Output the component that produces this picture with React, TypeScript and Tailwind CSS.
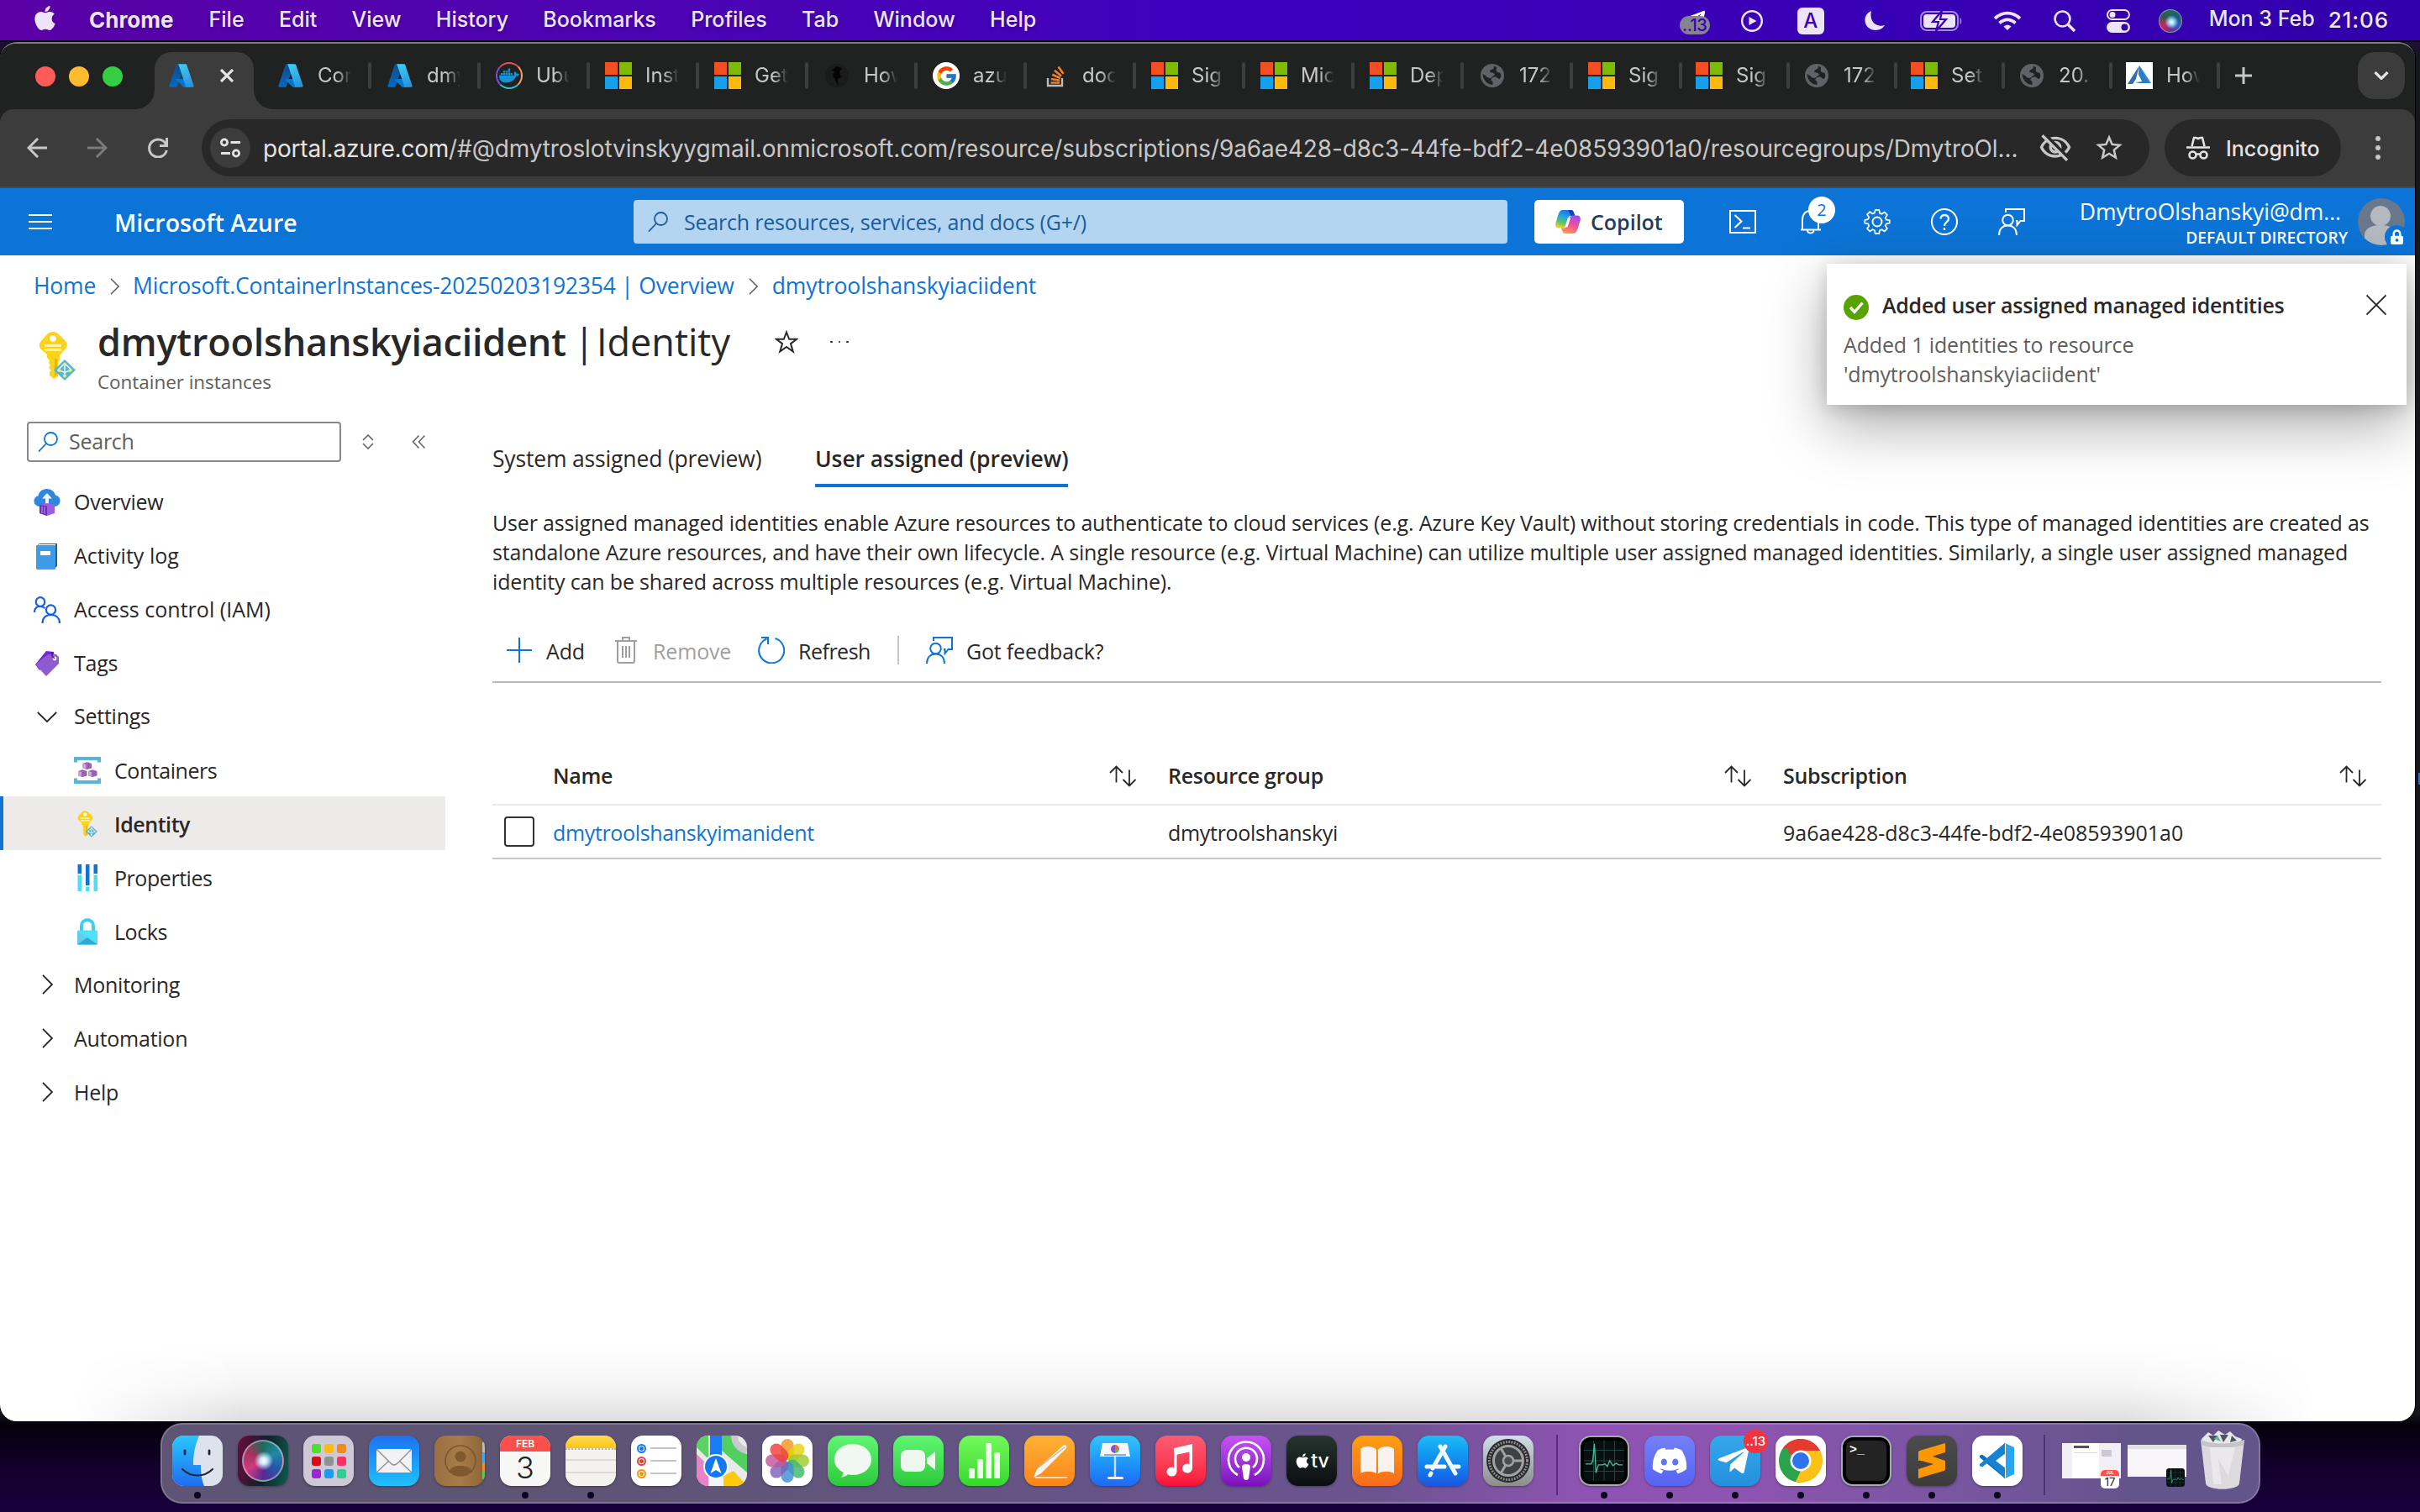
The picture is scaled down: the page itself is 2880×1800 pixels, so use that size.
import React from "react";
import { FaApple, FaDiscord, FaDocker, FaTelegramPlane } from "react-icons/fa";
import { FcGoogle } from "react-icons/fc";
import { MdOutlineVisibilityOff, MdStarBorder } from "react-icons/md";

/* ---------- shared glyphs ---------- */

function AzureLogo({ className }: { className: string }) {
  return (
    <svg viewBox="0 0 96 96" className={className}>
      <defs>
        <linearGradient id="azA" x1="0.6" y1="0" x2="0.3" y2="1">
          <stop offset="0" stopColor="#114a8b" />
          <stop offset="1" stopColor="#0669bc" />
        </linearGradient>
        <linearGradient id="azB" x1="0.3" y1="0" x2="0.7" y2="1">
          <stop offset="0" stopColor="#3ccbf4" />
          <stop offset="1" stopColor="#2892df" />
        </linearGradient>
      </defs>
      <path fill="url(#azA)" d="M33.338 6.544h26.038l-27.03 80.087a4.152 4.152 0 0 1-3.933 2.824H8.149a4.145 4.145 0 0 1-3.928-5.47L29.404 9.368a4.152 4.152 0 0 1 3.934-2.825z" />
      <path fill="#0078d4" d="M71.175 60.261h-41.29a1.911 1.911 0 0 0-1.305 3.309l26.532 24.764a4.171 4.171 0 0 0 2.846 1.121h23.38z" />
      <path fill="url(#azB)" d="M66.595 9.364a4.145 4.145 0 0 0-3.928-2.82H33.648a4.146 4.146 0 0 1 3.928 2.82l25.184 74.62a4.146 4.146 0 0 1-3.928 5.472h29.02a4.146 4.146 0 0 0 3.927-5.472z" />
    </svg>
  );
}

function MicrosoftLogo() {
  return (
    <div className="grid size-8 grid-cols-2 gap-[2px]">
      <div className="bg-[#f25022]" />
      <div className="bg-[#7fba00]" />
      <div className="bg-[#15a0ee]" />
      <div className="bg-[#ffb90a]" />
    </div>
  );
}

function Globe() {
  return (
    <svg viewBox="0 0 32 32" className="size-8">
      <circle cx="16" cy="16" r="14" fill="#5f6368" />
      <path d="M17.500 4.500c1 2 0 4-2.500 4.500-2 .5-2 1.500-1.500 3l4 1c2 1 1.500 3-.5 3.500-1.500.5-1.500 2-3 2.500-2.500.5-4-1-5.500-2.500L4.500 14c.5 7 5 12.500 12 13v-4c-2-.5-2.500-2-1.500-3.500 1-1.800 4-2.500 6-1.500 1.500.7 2 2 3.500 2 1.800-1.500 2.500-4.500 1-7-1.500-1-3.500-.5-4.500-2-1-2 .5-3.500 0-5z" fill="#202221" />
    </svg>
  );
}

function Favicon({ kind }: { kind: string }) {
  if (kind === "azure") return <AzureLogo className="size-8" />;
  if (kind === "ms") return <MicrosoftLogo />;
  if (kind === "globe") return <Globe />;
  if (kind === "docker")
    return (
      <div className="flex size-8 items-center justify-center rounded-full border-2 border-t-[#e8505b] border-r-[#f2a65a] border-b-[#27c4d9] border-l-[#7a4fd0]">
        <FaDocker className="size-6 text-[#1492d6]" />
      </div>
    );
  if (kind === "google")
    return (
      <div className="flex size-8 items-center justify-center rounded-full bg-white">
        <FcGoogle className="size-[27px]" />
      </div>
    );
  if (kind === "stack")
    return (
      <svg viewBox="0 0 32 32" className="size-8" fill="none">
        <path d="M7 19v9h17v-9" stroke="#bcbbbb" strokeWidth="2.4" />
        <path d="M10.500 24.500h10.500M10.800 20l10.300 1.800M12.300 14.800l9.500 4.200M15 9.800l8 6.600M19.500 5.500l6 8.300" stroke="#f48024" strokeWidth="2.600" />
      </svg>
    );
  if (kind === "dark")
    return (
      <svg viewBox="0 0 32 32" className="size-8">
        <circle cx="16" cy="16" r="14" fill="#1a1b1b" />
        <path d="M9 10l7-5 6 2-3 5 2 6-4 2 1 9-4-8-3-5 2-5z" fill="#050505" />
      </svg>
    );
  return (
    <svg viewBox="0 0 32 32" className="size-8">
      <rect width="32" height="32" fill="#fff" />
      <path d="M16 4l5 7 9 14H18l-7-1 8-1-4-9z" fill="#3b8fd0" />
      <path d="M16 4L2 26h6l4-6z" fill="#2f6fb2" />
      <path d="M16 4l4 8 8 13H12l8-2-5-8z" fill="#2d7cc1" />
    </svg>
  );
}

function Magnifier({ className }: { className: string }) {
  return (
    <svg viewBox="0 0 24 24" fill="none" stroke="currentColor" strokeWidth="1.800" className={className}>
      <circle cx="15.500" cy="8.500" r="7.500" />
      <path d="M10 14L1 23.500" />
    </svg>
  );
}

function Feedback({ className }: { className: string }) {
  return (
    <svg viewBox="0 0 32 32" fill="none" stroke="currentColor" strokeWidth="2" className={className}>
      <path d="M9 5V1h22v14h-4.500v0L22.500 20v-5H21" />
      <circle cx="11.500" cy="14" r="6.300" />
      <path d="M1 32c0-7 4-11.500 10.500-11.500S22 25 22 32" />
    </svg>
  );
}

function ChevronRight({ className }: { className: string }) {
  return (
    <svg viewBox="0 0 13 24" fill="none" stroke="currentColor" strokeWidth="1.800" className={className}>
      <path d="M1 .8L12 12 1 23.200" />
    </svg>
  );
}

function KeyIcon({ className }: { className: string }) {
  return (
    <svg viewBox="0 0 44 58" className={className}>
      <path d="M17 0c3 0 5 1 7 3l8 8c2.500 2.500 2.500 6 0 9l-7 8v5l-2 3v17l-5 3-5-4 0-4 2-2-3-3 2-3-2-3 1-3-3-3v-4L3 21c-3-4-3-7 0-10l7-8c2-2 4-3 7-3z" fill="#fdd31a" />
      <path d="M19 32h3v18l-3 4z" fill="#e8b50e" />
      <circle cx="17" cy="8" r="3.800" fill="#fff" />
      <rect x="7" y="15" width="20" height="2.800" fill="#fff3a8" />
      <rect x="7" y="20" width="20" height="2.800" fill="#fff3a8" />
      <path d="M31 33l13 12.500L31 58 18 45.500z" fill="#59b4d9" />
      <path d="M31 37v17M23 45.500l8-8 8 8-8 3z" stroke="#e6f6fb" strokeWidth="1.600" fill="none" />
      <circle cx="31" cy="39" r="2" fill="#d7f08a" />
      <circle cx="24.500" cy="46" r="2" fill="#d7f08a" />
      <circle cx="37.500" cy="46" r="2" fill="#d7f08a" />
      <circle cx="31" cy="52.500" r="2" fill="#d7f08a" />
    </svg>
  );
}

/* ---------- macOS menu bar ---------- */

function MenuBar() {
  return (
    <div className="flex h-12 items-center bg-linear-to-r from-[#5a00a6] via-[#3f00be] to-[#3300ad] font-['Inter','Liberation_Sans',sans-serif] text-[25px] font-medium whitespace-nowrap text-[#ece4f8] text-shadow-[0_2px_4px_rgb(0_0_0/0.25)]">
      <FaApple className="mb-[5px] ml-[37px] size-[33px]" />
      <div className="mb-px ml-[36px] text-[26px] font-bold">Chrome</div>
      <div className="mb-px ml-[42px] flex gap-[41.300px]">
        <span>File</span>
        <span>Edit</span>
        <span>View</span>
        <span>History</span>
        <span>Bookmarks</span>
        <span>Profiles</span>
        <span>Tab</span>
        <span>Window</span>
        <span>Help</span>
      </div>
      <div className="ml-auto flex items-center pt-[2px]">
        <div className="relative h-8 w-9">
          <FaTelegramPlane className="ml-[2px] size-[30px] text-white" />
          <div className="absolute top-[10px] left-0 flex h-[22px] w-9 items-center justify-center rounded-full bg-[#85848c] text-[20px] tracking-[-0.500px] text-[#3c00b8] text-shadow-none">..13</div>
        </div>
        <svg viewBox="0 0 26 26" className="ml-[37px] size-[26px]">
          <circle cx="13" cy="13" r="11.800" fill="none" stroke="currentColor" strokeWidth="2.400" />
          <path d="M9.500 8v10l9-5z" fill="currentColor" />
        </svg>
        <div className="ml-[41px] flex size-8 items-center justify-center rounded-md bg-[#ece4f8] text-[24px] text-[#3a00b4] text-shadow-none">A</div>
        <svg viewBox="0 0 26 26" className="ml-[47px] h-[26px] w-[26px]">
          <path d="M9 1C2 4 0 11 2.500 17c3.500 8 17 10 22.500 1C16 21 6 15 9 1z" fill="currentColor" />
        </svg>
        <svg viewBox="0 0 50 26" className="ml-[41px] h-[26px] w-[50px]">
          <rect x="1" y="2" width="44" height="22" rx="7" fill="none" stroke="currentColor" strokeWidth="2" opacity=".6" />
          <rect x="4" y="5" width="38" height="16" rx="4" fill="currentColor" />
          <path d="M47.500 9c2.500 1 2.500 7 0 8z" fill="currentColor" opacity=".6" />
          <path d="M26 1L15 14h7l-3 11 12-14h-7z" fill="currentColor" stroke="#3800b4" strokeWidth="2.200" />
        </svg>
        <svg viewBox="0 0 34 24" className="ml-[37px] h-[24px] w-[34px]" fill="none" stroke="currentColor" strokeWidth="3.800">
          <path d="M2 9c9-8.500 21-8.500 30 0M7.500 14.500c6-5.500 13-5.500 19 0" />
          <path d="M17 23l-4.500-4.500c3-2.500 6-2.500 9 0z" fill="currentColor" stroke="none" />
        </svg>
        <svg viewBox="0 0 26 26" className="ml-[38px] size-[26px]" fill="none" stroke="currentColor" strokeWidth="2.600">
          <circle cx="10.500" cy="10.500" r="9" />
          <path d="M17 17l8 8" strokeWidth="3.400" />
        </svg>
        <svg viewBox="0 0 28 28" className="ml-[37px] size-[28px]">
          <rect x="1" y="1" width="26" height="11" rx="5.500" fill="none" stroke="currentColor" strokeWidth="2" />
          <circle cx="7" cy="6.500" r="3.500" fill="currentColor" />
          <rect x="0" y="15" width="28" height="13" rx="6.500" fill="currentColor" />
          <circle cx="21.500" cy="21.500" r="4" fill="#3600b1" />
        </svg>
        <div className="ml-[34px] size-7 rounded-full border border-white/40 bg-[radial-gradient(circle_at_55%_55%,#fff_0%,#9fd8ff_15%,transparent_40%),conic-gradient(#1b6b58,#1c5c7a,#2b5cc4,#7a2a8a,#c42a58,#34564e,#1b6b58)]" />
        <div className="mr-[37px] ml-[32px] -mt-1 flex gap-[16px]">
          <span>Mon 3 Feb</span>
          <span className="text-[26px] tracking-[0.900px]">21:06</span>
        </div>
      </div>
    </div>
  );
}

/* ---------- Chrome ---------- */

const TABS: [string, string][] = [
  ["azure", "Cor"],
  ["azure", "dmy"],
  ["docker", "Ubu"],
  ["ms", "Inst"],
  ["ms", "Get"],
  ["dark", "How"],
  ["google", "azu"],
  ["stack", "doc"],
  ["ms", "Sig"],
  ["ms", "Mic"],
  ["ms", "Dep"],
  ["globe", "172"],
  ["ms", "Sig"],
  ["ms", "Sig"],
  ["globe", "172"],
  ["ms", "Set"],
  ["globe", "20."],
  ["white", "How"],
];

function TabStrip() {
  return (
    <div className="flex h-[78px] bg-[#202221] font-['Inter','Liberation_Sans',sans-serif]">
      <div className="mt-[27px] ml-[42px] flex gap-4">
        <div className="size-6 rounded-full bg-[#ff5b57]" />
        <div className="size-6 rounded-full bg-[#fdbc30]" />
        <div className="size-6 rounded-full bg-[#35cd42]" />
      </div>
      <svg viewBox="0 0 24 24" className="mt-[54px] ml-[14px] size-6 fill-[#3c3c3c]">
        <path d="M24 0v24H0C14 24 24 14 24 0z" />
      </svg>
      <div className="mt-[10px] flex h-[68px] w-[118px] items-center rounded-t-[20px] bg-[#3c3c3c] pb-3 pl-4">
        <AzureLogo className="size-8" />
        <svg viewBox="0 0 16 16" className="ml-[30px] size-4" stroke="#e3e3e3" strokeWidth="3.200">
          <path d="M1 1l14 14M15 1L1 15" />
        </svg>
      </div>
      <svg viewBox="0 0 24 24" className="mt-[54px] size-6 fill-[#3c3c3c]">
        <path d="M0 0v24h24C10 24 0 14 0 0z" />
      </svg>
      <div className="mt-[22px] ml-1 flex h-8">
        {TABS.map(([kind, label], i) => (
          <div key={i} className={i < 12 ? "flex w-[130px] items-center" : "flex w-[128px] items-center"}>
            <Favicon kind={kind} />
            <div className="ml-4 w-[56px] text-[24px] whitespace-nowrap text-[#c7c7c7] [mask-image:linear-gradient(to_right,#000_22px,transparent_40px)]">{label}</div>
            <div className="ml-1 h-8 w-1 rounded-full bg-[#3d3f3e]" />
          </div>
        ))}
      </div>
      <svg viewBox="0 0 20 20" className="mt-[28px] ml-[2px] size-5" stroke="#c7c7c7" strokeWidth="3">
        <path d="M10 0v20M0 10h20" />
      </svg>
      <div className="mt-[10px] mr-3 ml-auto flex size-14 items-center justify-center rounded-[20px] bg-[#3c3c3c]">
        <svg viewBox="0 0 18 10" className="h-[10px] w-[18px]" fill="none" stroke="#e3e3e3" strokeWidth="3.200">
          <path d="M1.500 1L9 8.500 16.500 1" />
        </svg>
      </div>
    </div>
  );
}

function AddressBar() {
  return (
    <div className="bg-[#202221]">
      <div className="flex h-[94px] items-center rounded-t-[16px] border-b-2 border-[#474747] bg-[#3c3c3c] font-['Inter','Liberation_Sans',sans-serif] text-[#c7c7c7]">
        <svg viewBox="0 0 24 24" className="ml-8 size-6" fill="none" stroke="currentColor" strokeWidth="3">
          <path d="M13 1L2 12l11 11M2 12h22" />
        </svg>
        <svg viewBox="0 0 24 24" className="ml-12 size-6" fill="none" stroke="#7b7b7b" strokeWidth="3">
          <path d="M11 1l11 11-11 11M22 12H0" />
        </svg>
        <svg viewBox="0 0 24 24" className="ml-12 size-6" fill="none" stroke="currentColor" strokeWidth="3">
          <path d="M22.500 0v9.500H14M22 9A10.500 10.500 0 1 0 22.300 15" />
        </svg>
        <div className="ml-10 flex h-[68px] w-[2318px] items-center rounded-full bg-[#282828] pl-[10px]">
          <div className="flex size-12 items-center justify-center rounded-full bg-[#3c3c3c]">
            <svg viewBox="0 0 24 24" className="size-6" fill="none" stroke="#e3e3e3" strokeWidth="2.800">
              <circle cx="5" cy="5.500" r="3.600" />
              <circle cx="19" cy="18.500" r="3.600" />
              <path d="M12.500 5.500H24M1 18.500h11" />
            </svg>
          </div>
          <div className="ml-[15px] w-[2102px] pt-px text-[28px] tracking-[-0.110px] whitespace-nowrap">
            <span className="tracking-[-0.200px] text-[#e3e3e3]">portal.azure.com</span>
            <span>/#@dmytroslotvinskyygmail.onmicrosoft.com/resource/subscriptions/9a6ae428-d8c3-44fe-bdf2-4e08593901a0/resourcegroups/DmytroOl...</span>
          </div>
          <MdOutlineVisibilityOff className="ml-[11px] size-[40px]" />
          <MdStarBorder className="ml-[25px] size-[38px]" />
        </div>
        <div className="ml-[18px] flex h-[68px] w-[210px] items-center rounded-full bg-[#282828] pl-[26px] text-[#e3e3e3]">
          <svg viewBox="0 0 28 28" className="size-7" fill="none" stroke="currentColor" strokeWidth="2.600">
            <path d="M0 13.500h28M6.500 12L9 2h2.500l2.500 1 2.500-1H19l2.500 10" />
            <circle cx="7.500" cy="22.500" r="4" />
            <circle cx="20.500" cy="22.500" r="4" />
            <path d="M11 21.500h6" />
          </svg>
          <span className="ml-[19px] pt-[3px] text-[25px] font-medium">Incognito</span>
        </div>
        <div className="ml-[41px] flex flex-col gap-[5px]">
          <div className="size-[6px] rounded-full bg-[#c7c7c7]" />
          <div className="size-[6px] rounded-full bg-[#c7c7c7]" />
          <div className="size-[6px] rounded-full bg-[#c7c7c7]" />
        </div>
      </div>
    </div>
  );
}

/* ---------- Azure portal ---------- */

function CopilotIcon() {
  return (
    <svg viewBox="0 0 30 28" className="h-7 w-[30px]">
      <defs>
        <linearGradient id="cpA" x1="0.6" y1="0" x2="0.3" y2="1">
          <stop offset="0" stopColor="#1c6fe0" />
          <stop offset=".4" stopColor="#26a8e0" />
          <stop offset=".7" stopColor="#5cc36a" />
          <stop offset="1" stopColor="#f2cf2a" />
        </linearGradient>
        <linearGradient id="cpB" x1="0.7" y1="0" x2="0.3" y2="1">
          <stop offset="0" stopColor="#a24be8" />
          <stop offset=".5" stopColor="#ee4f9a" />
          <stop offset="1" stopColor="#fb9a52" />
        </linearGradient>
      </defs>
      <path d="M9 0h9c2.500 0 3.500 2 4.500 5l.5 2h-4c-3 0-3.500 2-4.500 5l-2 6c-1 2.500-2 3.500-4 3.500H4c-3 0-4.500-2-3.600-6l3-10C4.500 2 6 0 9 0z" fill="url(#cpA)" />
      <path d="M15 0h4c2 0 3 2 3.700 5l.5 2h-4.500z" fill="#1b3fc4" />
      <path d="M21 28h-9c-2.500 0-3.500-2-4.500-5L7 21.500h2.500c3 0 4-2 5-5l2-6c1-2.500 2-4 4-4H26c3 0 4.500 2 3.600 6l-3 10C25.500 26 24 28 21 28z" fill="url(#cpB)" />
      <path d="M16.500 9.500L13 20" stroke="#fff" strokeWidth="3" />
    </svg>
  );
}

function PortalHeader() {
  return (
    <div className="flex h-20 items-center bg-[#0c74d6] text-white">
      <div className="ml-[34px] flex flex-col gap-[6px]">
        <div className="h-[2px] w-7 bg-white" />
        <div className="h-[2px] w-7 bg-white" />
        <div className="h-[2px] w-7 bg-white" />
      </div>
      <div className="ml-[74px] w-[618px] pt-[2px] text-[28.500px] font-semibold">Microsoft Azure</div>
      <div className="flex h-[52px] w-[1040px] items-center rounded-[4px] bg-[#b3d5f2] pl-[17px] text-[#1a5c9c]">
        <Magnifier className="size-6" />
        <span className="ml-[19px] pt-px text-[25px] tracking-[-0.200px]">Search resources, services, and docs (G+/)</span>
      </div>
      <div className="ml-8 flex h-[52px] w-[178px] items-center rounded-[5px] bg-white pl-[25px] text-[#243a5e]">
        <CopilotIcon />
        <span className="ml-[12px] pt-px text-[25px] font-semibold">Copilot</span>
      </div>
      <svg viewBox="0 0 32 28" className="ml-[54px] h-7 w-8" fill="none" stroke="currentColor" strokeWidth="2">
        <rect x="1" y="1" width="30" height="26" />
        <path d="M6.500 6l8 7.500-8 7.500M16 21.500h9" />
      </svg>
      <div className="relative ml-[52px] h-8 w-7">
        <svg viewBox="0 0 26 32" className="h-8 w-[26px]" fill="none" stroke="currentColor" strokeWidth="2">
          <path d="M1 25.500h24M3 25V13C3 7 7 3 12.500 3S22 7 22 13v12M9 26c0 4.500 7.500 4.500 7.500 0" />
        </svg>
        <div className="absolute -top-[14px] left-[10px] flex size-8 items-center justify-center rounded-full bg-white text-[20px] text-[#0c74d6]">2</div>
      </div>
      <svg viewBox="0 0 32 32" className="ml-[48px] size-8" fill="none" stroke="currentColor" strokeWidth="1.900" strokeLinejoin="round">
        <path d="M13.500 1h5l.8 4.200 2.600 1.100 3.600-2.400 3.500 3.500-2.400 3.600 1.100 2.600L32 14.200v4l-4.300.8-1.100 2.600 2.400 3.600-3.500 3.500-3.600-2.400-2.600 1.100-.8 4.200h-5l-.8-4.200-2.600-1.100-3.600 2.400L3 25.200l2.400-3.600L4.300 19 0 18.200v-4l4.300-1.200 1.100-2.600L3 7l3.500-3.500 3.600 2.400 2.600-1.100z" transform="translate(1.300 1) scale(.92)" />
        <circle cx="16" cy="16" r="5.500" />
      </svg>
      <svg viewBox="0 0 32 32" className="ml-12 size-8" fill="none" stroke="currentColor" strokeWidth="2">
        <circle cx="16" cy="16" r="15" />
        <path d="M11.500 12.500c0-6 9.500-6 9.500 0 0 4-5 4-5 8.500M16 23v3" strokeWidth="2.300" />
      </svg>
      <Feedback className="ml-12 size-8" />
      <div className="mt-1 mr-3 ml-auto flex flex-col items-end">
        <div className="mr-2 h-[34px] text-[26.500px] leading-[34px] tracking-[-0.050px]">DmytroOlshanskyi@dm...</div>
        <div className="h-7 text-[19.200px] leading-7 font-semibold">DEFAULT DIRECTORY</div>
      </div>
      <div className="relative mr-3">
        <svg viewBox="0 0 56 56" className="size-14">
          <defs>
            <clipPath id="avatar">
              <circle cx="28" cy="28" r="28" />
            </clipPath>
          </defs>
          <g clipPath="url(#avatar)">
            <rect width="56" height="56" fill="#69798b" />
            <circle cx="27" cy="21" r="12" fill="#b4bac0" />
            <path d="M8 56V44c0-8 8-12 19-12s19 4 19 12v12z" fill="#b4bac0" />
          </g>
        </svg>
        <div className="absolute right-[-4px] bottom-[-4px] flex size-7 items-center justify-center rounded-full bg-[#0c74d6]">
          <svg viewBox="0 0 16 20" className="h-[19px] w-[15px]">
            <path d="M4 9V5.500C4 0 12 0 12 5.500V9" fill="none" stroke="#fff" strokeWidth="2.600" />
            <rect x="0" y="8" width="16" height="11" rx="2" fill="#fff" />
            <circle cx="8" cy="13.500" r="2" fill="#0c74d6" />
          </svg>
        </div>
      </div>
    </div>
  );
}

function Toast() {
  return (
    <div className="absolute top-[90px] right-[10px] h-[168px] w-[690px] bg-white pt-[30px] pl-5 shadow-[0_24px_70px_rgb(0_0_0/0.34),0_4px_20px_rgb(0_0_0/0.16)]">
      <div className="flex h-10 items-center">
        <svg viewBox="0 0 30 30" className="mt-[3px] size-[30px]">
          <circle cx="15" cy="15" r="15" fill="#57a300" />
          <path d="M8 15l5 5.500L22.500 9.500" fill="none" stroke="#fff" strokeWidth="3.400" />
        </svg>
        <span className="ml-4 text-[25px] font-semibold tracking-[-0.250px] text-[#292827]">Added user assigned managed identities</span>
        <svg viewBox="0 0 24 24" className="mr-6 mb-[3px] ml-auto size-6" stroke="#292827" strokeWidth="1.900">
          <path d="M.5.5l23 23M23.500.5l-23 23" />
        </svg>
      </div>
      <div className="mt-[9px] text-[25px] leading-[35px] tracking-[-0.160px] text-[#605e5c]">
        Added 1 identities to resource
        <br />
        'dmytroolshanskyiaciident'
      </div>
    </div>
  );
}

function NavIcon({ kind }: { kind: string }) {
  if (kind === "overview")
    return (
      <svg viewBox="0 0 32 32" className="size-8">
        <path d="M8 21c-5 0-7.500-3-7.500-6.500S3 8.500 5.500 8.500C6 4 10 0 15.500 0S25 3.500 26 7.500c3 .5 5.500 3 5.500 6.500 0 4-3 7-6.500 7z" fill="#2f86e0" />
        <path d="M16 5l6 6.500h-4V18h-4v-6.500h-4z" fill="#f2f6fc" />
        <path d="M7 19l9-2 9 2v10l-9 3-9-3z" fill="#9a5fe0" />
        <path d="M7 19l9 1.500V32l-9-3z" fill="#6b2fb8" />
        <path d="M10 21v8M13 21.500v8" stroke="#b78bea" strokeWidth="1.200" />
      </svg>
    );
  if (kind === "log")
    return (
      <svg viewBox="0 0 32 32" className="size-8">
        <path d="M8 1h20v27l-3 3V4H5c0-2 1-3 3-3z" fill="#1463ab" />
        <path d="M6 2h20v26H8z" fill="#fff" />
        <rect x="3" y="3" width="23" height="29" rx="1" fill="#3d9be8" />
        <rect x="8" y="10" width="12" height="5" fill="#fff" />
      </svg>
    );
  if (kind === "iam")
    return (
      <svg viewBox="0 0 32 32" className="size-8" fill="none" stroke="#1660d8" strokeWidth="2.200">
        <circle cx="8" cy="6.500" r="5.300" />
        <path d="M1 19c0-4.500 2.500-7 7-7 2 0 4 .6 5.500 2" />
        <circle cx="20.500" cy="16" r="5.600" />
        <path d="M10.500 32c0-6.500 4-10 10-10s10.500 3.500 10.500 10" />
      </svg>
    );
  if (kind === "tags")
    return (
      <svg viewBox="0 0 32 32" className="size-8">
        <path d="M15 1l9 1 1 6-18 16-5-7z" fill="#7a22d6" />
        <path d="M17 5h10l3 3v8L15 31 2 17z" fill="#8f5bd0" />
        <circle cx="25" cy="10" r="2.400" fill="#fff" />
        <path d="M22 2v5l3 3" stroke="#4b1a8c" strokeWidth="1.500" fill="none" />
      </svg>
    );
  if (kind === "containers")
    return (
      <svg viewBox="0 0 32 32" className="size-8">
        <path d="M0 0h32v6.500h-4V4H4v2.500H0zM0 32h32v-6.500h-4V28H4v-2.500H0z" fill="#59b4d9" />
        <path d="M10.500 8l5-1.800L21 8v5.500l-5.500 1.500-5-1.500z M5 17l5-1.800L15.500 17v5.500L10 24l-5-1.500z M17 17l5-1.800L27.500 17v5.500L22 24l-5-1.500z" fill="#9b5fb3" />
        <path d="M10.500 8l4 1v5.500l-4-1zM5 17l4 1v5.500l-4-1zM17 17l4 1v5.500l-4-1z" fill="#c9a3d8" />
      </svg>
    );
  if (kind === "identity")
    return (
      <div className="flex size-8 justify-center">
        <KeyIcon className="h-8 w-6" />
      </div>
    );
  if (kind === "properties")
    return (
      <svg viewBox="0 0 32 32" className="size-8">
        <path d="M4.500 0h4.500v11H4.500zM14 0h4.500v25H14zM23.500 0H28v11h-4.500z" fill="#0f74d4" />
        <path d="M4.500 13H9v19H4.500zM14 27h4.500v5H14zM23.500 13H28v19h-4.500z" fill="#50dcf8" />
        <path d="M4 11h5.500v2H4zM13.500 25H19v2h-5.500zM23 11h5.500v2H23z" fill="#e3e3e3" />
      </svg>
    );
  return (
    <svg viewBox="0 0 32 32" className="size-8">
      <path d="M9 16V9c0-9 14-9 14 0v7" fill="none" stroke="#3fcdf0" strokeWidth="4" />
      <rect x="4" y="14.500" width="24" height="17" rx="1" fill="#50e0fa" />
      <path d="M4 15l12 9-12 7z" fill="#62cdea" />
      <path d="M4 31.500L16 23l12 8.500z" fill="#2fa9cf" />
    </svg>
  );
}

function NavItem({ kind, label, wide }: { kind: string; label: string; wide?: boolean }) {
  return (
    <div className="flex h-16 items-center pl-10">
      <NavIcon kind={kind} />
      <span className={wide ? "ml-4 tracking-[0.020px]" : "ml-4"}>{label}</span>
    </div>
  );
}

function SubNavItem({ kind, label, selected }: { kind: string; label: string; selected?: boolean }) {
  return (
    <div className={selected ? "flex h-16 items-center border-l-4 border-[#0f74d6] bg-[#edebe9] pl-[84px] font-semibold tracking-[-0.450px]" : "flex h-16 items-center pl-[88px] tracking-[-0.450px]"}>
      <div className="pt-[2px]">
        <NavIcon kind={kind} />
      </div>
      <span className="ml-4 pt-[3px]">{label}</span>
    </div>
  );
}

function NavGroup({ label }: { label: string }) {
  return (
    <div className="flex h-16 items-center pl-[50px]">
      <ChevronRight className="h-6 w-[13px]" />
      <span className="ml-[25px] pt-px">{label}</span>
    </div>
  );
}

function Sidebar() {
  return (
    <div className="w-[530px] text-[25px] tracking-[-0.250px] text-[#292827]">
      <div className="flex h-12 items-center pl-8">
        <div className="flex h-12 w-[374px] items-center rounded-[4px] border-2 border-[#8a8886] pl-[11px]">
          <Magnifier className="size-6 text-[#0f74d6]" />
          <span className="ml-[13px] text-[#605e5c]">Search</span>
        </div>
        <svg viewBox="0 0 14 18" className="ml-[25px] h-[18px] w-[14px]" fill="none" stroke="#605e5c" strokeWidth="1.500">
          <path d="M1 7l6-6 6 6M1 11l6 6 6-6" />
        </svg>
        <svg viewBox="0 0 16 16" className="ml-[45px] size-4" fill="none" stroke="#605e5c" strokeWidth="1.500">
          <path d="M8.500.5L1.500 8l7 7.500M15.500.5L8.500 8l7 7.500" />
        </svg>
      </div>
      <div className="pt-4">
        <NavItem kind="overview" label="Overview" />
        <NavItem kind="log" label="Activity log" wide />
        <NavItem kind="iam" label="Access control (IAM)" wide />
        <NavItem kind="tags" label="Tags" />
        <div className="flex h-[62px] items-center pl-11">
          <svg viewBox="0 0 24 13" className="h-[13px] w-6" fill="none" stroke="currentColor" strokeWidth="1.800">
            <path d="M.8 1L12 12 23.200 1" />
          </svg>
          <span className="ml-5">Settings</span>
        </div>
        <SubNavItem kind="containers" label="Containers" />
        <SubNavItem kind="identity" label="Identity" selected />
        <SubNavItem kind="properties" label="Properties" />
        <SubNavItem kind="locks" label="Locks" />
        <NavGroup label="Monitoring" />
        <NavGroup label="Automation" />
        <NavGroup label="Help" />
      </div>
    </div>
  );
}

function HeaderCell({ label, className }: { label: string; className: string }) {
  return (
    <div className={className}>
      <span className="-mt-px">{label}</span>
      <svg viewBox="0 0 32 26" className="h-[26px] w-8" fill="none" stroke="currentColor" strokeWidth="1.800">
        <path d="M8.500 20.500V1.500M1 9l7.500-7.500L16 9M24 5.500V24.500M16.500 17l7.500 7.500 7.500-7.500" />
      </svg>
    </div>
  );
}

function IdentityPanel() {
  return (
    <div className="ml-14 w-[2248px] text-[25px] tracking-[-0.160px] text-[#292827]">
      <div className="flex gap-[60px] pt-[22px] text-[26.500px]">
        <div className="h-14 w-[324px] leading-[44px] whitespace-nowrap">System assigned (preview)</div>
        <div className="h-14 w-[301px] border-b-4 border-[#0f74d6] leading-[44px] font-semibold tracking-[-0.080px] whitespace-nowrap">User assigned (preview)</div>
      </div>
      <div className="pt-[25px] leading-[35px] whitespace-nowrap">
        User assigned managed identities enable Azure resources to authenticate to cloud services (e.g. Azure Key Vault) without storing credentials in code. This type of managed identities are created as
        <br />
        standalone Azure resources, and have their own lifecycle. A single resource (e.g. Virtual Machine) can utilize multiple user assigned managed identities. Similarly, a single user assigned managed
        <br />
        identity can be shared across multiple resources (e.g. Virtual Machine).
      </div>
      <div className="mt-[28px] flex h-[75px] items-center border-b-2 border-[#bbb9b8] pb-[2px] pl-[17px]">
        <svg viewBox="0 0 30 30" className="size-[30px]" stroke="#0f74d6" strokeWidth="2">
          <path d="M15 0v30M0 15h30" />
        </svg>
        <span className="mt-[5px] ml-[17px] w-[82px]">Add</span>
        <svg viewBox="0 0 26 32" className="h-8 w-[26px]" fill="none" stroke="#a19f9d" strokeWidth="2">
          <path d="M0 5h26M9 5V1h8v4M3 5v24c0 1.500.5 2 2 2h16c1.500 0 2-.5 2-2V5M9 11v14M13 11v14M17 11v14" />
        </svg>
        <span className="mt-[5px] ml-[19px] w-[125px] text-[#a19f9d]">Remove</span>
        <svg viewBox="0 0 32 32" className="size-8" fill="none" stroke="#0f74d6" strokeWidth="2">
          <path d="M20.500 2A15 15 0 1 1 10.500 2.500M4 1h8v8" />
        </svg>
        <span className="mt-[5px] ml-4 tracking-[-0.500px]">Refresh</span>
        <div className="ml-[32px] h-[34px] w-[2px] bg-[#c8c6c4]" />
        <Feedback className="ml-[32px] size-8 text-[#0f74d6]" />
        <span className="mt-[5px] ml-4">Got feedback?</span>
      </div>
      <div className="mt-[78px] flex h-[68px] items-center border-b-2 border-[#eaeaea] pl-[72px] font-semibold tracking-[-0.300px]">
        <HeaderCell label="Name" className="flex w-[694px] items-center justify-between" />
        <HeaderCell label="Resource group" className="ml-[38px] flex w-[694px] items-center justify-between" />
        <HeaderCell label="Subscription" className="ml-[38px] flex w-[694px] items-center justify-between" />
      </div>
      <div className="flex h-16 items-center border-b-2 border-[#c8c8c8] pl-[14px]">
        <div className="size-9 rounded-[4px] border-2 border-[#323130]" />
        <span className="ml-[22px] w-[732px] pt-1 tracking-[-0.350px] text-[#0f74d6]">dmytroolshanskyimanident</span>
        <span className="w-[732px] pt-1 tracking-[-0.300px]">dmytroolshanskyi</span>
        <span className="pt-1 tracking-[-0.010px]">9a6ae428-d8c3-44fe-bdf2-4e08593901a0</span>
      </div>
    </div>
  );
}

function Portal() {
  return (
    <div className="relative flex flex-1 flex-col overflow-hidden bg-white font-['Open_Sans','Noto_Sans',sans-serif]">
      <div className="pointer-events-none absolute bottom-0 left-0 h-[90px] w-full bg-[linear-gradient(to_top,rgb(0_0_0/0.13),rgb(0_0_0/0.04)_45%,transparent)] [mask-image:linear-gradient(to_right,transparent_3%,#000_10%,#000_88%,transparent_96%)]" />
      <PortalHeader />
      <div className="flex h-[72px] items-center pt-[2px] pl-10 text-[26.500px] tracking-[-0.200px] text-[#0f74d6]">
        <span>Home</span>
        <ChevronRight className="ml-[17px] h-5 w-[11px] text-[#605e5c]" />
        <span className="ml-[16px]">Microsoft.ContainerInstances-20250203192354 | Overview</span>
        <ChevronRight className="ml-[17px] h-5 w-[11px] text-[#605e5c]" />
        <span className="ml-[17px] tracking-[-0.100px]">dmytroolshanskyiaciident</span>
      </div>
      <div className="flex h-[126px] pl-[46px] text-[#292827]">
        <KeyIcon className="mt-[19px] h-[58px] w-[44px]" />
        <div className="ml-[26px]">
          <div className="flex h-[62px] items-center text-[45px]">
            <span className="w-[567px] font-semibold tracking-[-0.220px]">dmytroolshanskyiaciident</span>
            <span className="w-[27px]">|</span>
            <span className="w-[162px]">Identity</span>
            <svg viewBox="0 0 28 28" className="ml-[50px] size-7" fill="none" stroke="currentColor" strokeWidth="2">
              <path d="M14 2.500l3.200 8.300H26l-7 5.400 2.800 9.300L14 20l-7.800 5.500L9 16.200l-7-5.400h8.800z" />
            </svg>
            <div className="ml-[38px] flex gap-[7px]">
              <div className="size-[2.500px] rounded-full bg-[#292827]" />
              <div className="size-[2.500px] rounded-full bg-[#292827]" />
              <div className="size-[2.500px] rounded-full bg-[#292827]" />
            </div>
          </div>
          <div className="h-8 pt-px text-[22.500px] leading-8 tracking-[-0.050px] text-[#605e5c]">Container instances</div>
        </div>
      </div>
      <div className="flex">
        <Sidebar />
        <IdentityPanel />
      </div>
      <Toast />
    </div>
  );
}

/* ---------- Dock ---------- */

function DockItem({ dot, children }: { dot?: boolean; children: React.ReactNode }) {
  return (
    <div className="flex w-[78px] flex-col items-center pt-[13px]">
      {children}
      {dot ? <div className="mt-[7px] size-2 rounded-full bg-[#0c0620]" /> : null}
    </div>
  );
}

const tile = "relative flex size-[60px] items-center justify-center overflow-hidden rounded-[14px] shadow-[0_1px_3px_rgb(0_0_0/0.35)] ";

function Finder() {
  return (
    <svg viewBox="0 0 60 60" className="size-[60px] rounded-[14px]">
      <defs>
        <linearGradient id="fdA" x1="0" y1="0" x2="0" y2="1">
          <stop offset="0" stopColor="#27c8fd" />
          <stop offset="1" stopColor="#1f6cf0" />
        </linearGradient>
      </defs>
      <rect width="60" height="60" fill="#dde3ec" />
      <path d="M0 0h32c-5 12-7 22-7 35h9c0 10 1 18 4 25H0z" fill="url(#fdA)" />
      <path d="M15 18v4M44 18v4" stroke="#1c2a3a" strokeWidth="2.800" strokeLinecap="round" />
      <path d="M12 40c10 10 26 10 36 0" stroke="#1c2a3a" strokeWidth="2.200" fill="none" strokeLinecap="round" />
    </svg>
  );
}

function Launchpad() {
  return (
    <div className={tile + "bg-[#cdc9d6]"}>
      <div className="grid grid-cols-3 gap-[4px]">
        <div className="size-[11px] rounded-[3px] bg-[#4be02a]" />
        <div className="size-[11px] rounded-[3px] bg-[#fdbb12]" />
        <div className="size-[11px] rounded-[3px] bg-[#f58a1c]" />
        <div className="size-[11px] rounded-[3px] bg-[#d80d1c]" />
        <div className="size-[11px] rounded-[3px] bg-[#8d9394]" />
        <div className="size-[11px] rounded-[3px] bg-[#fb2f62]" />
        <div className="size-[11px] rounded-[3px] bg-[#9a26d4]" />
        <div className="size-[11px] rounded-[3px] bg-[#1e9af5]" />
        <div className="size-[11px] rounded-[3px] bg-[#2ccf94]" />
      </div>
    </div>
  );
}

function Photos() {
  const petals = ["#f7941d", "#e8d20b", "#9ccc2c", "#3fb86b", "#3f8fd2", "#7d62b8", "#c0559c", "#ee3f3a"];
  return (
    <div className={tile + "bg-white"}>
      <svg viewBox="0 0 60 60" className="size-[60px]">
        {petals.map((c, i) => (
          <rect key={c} x="22.500" y="4" width="15" height="25" rx="7.500" fill={c} opacity=".82" transform={`rotate(${i * 45} 30 30)`} />
        ))}
      </svg>
    </div>
  );
}

function Maps() {
  return (
    <svg viewBox="0 0 60 60" className="size-[60px] rounded-[14px]">
      <rect width="60" height="60" fill="#e9e9ec" />
      <path d="M0 0h14v28L0 14z" fill="#5bd364" />
      <path d="M0 22l14 14v24H0z" fill="#e884c4" />
      <path d="M30 0h14c0 12 6 18 16 22v22L30 18z" fill="#50d060" />
      <path d="M60 60H32V48l12-6z" fill="#fccb10" />
      <path d="M45 0c0 9 6 16 15 18" stroke="#c9c9cd" strokeWidth="8" fill="none" />
      <path d="M16 0h14v60H16z" fill="#1a7cf5" />
      <path d="M14 42h18v18H14z" fill="#f4f4f6" />
      <circle cx="23" cy="37" r="15" fill="#fff" />
      <circle cx="23" cy="37" r="13" fill="#1478f2" />
      <path d="M23 27l6.500 18L23 41l-6.500 4z" fill="#fff" />
    </svg>
  );
}

function Reminders() {
  return (
    <div className={tile + "flex-col gap-[4px] bg-white"}>
      <div className="flex items-center gap-[5px]">
        <div className="size-[11px] rounded-full border-2 border-[#1477f5] p-[1px]"><div className="size-full rounded-full bg-[#1477f5]" /></div>
        <div className="h-[2px] w-[31px] bg-[#c4c4c6]" />
      </div>
      <div className="flex items-center gap-[5px]">
        <div className="size-[11px] rounded-full border-2 border-[#f33b32] p-[1px]"><div className="size-full rounded-full bg-[#f33b32]" /></div>
        <div className="h-[2px] w-[31px] bg-[#c4c4c6]" />
      </div>
      <div className="flex items-center gap-[5px]">
        <div className="size-[11px] rounded-full border-2 border-[#f7930e] p-[1px]"><div className="size-full rounded-full bg-[#f7930e]" /></div>
        <div className="h-[2px] w-[31px] bg-[#c4c4c6]" />
      </div>
    </div>
  );
}

function Settings() {
  return (
    <div className={tile + "bg-linear-to-b from-[#cfe0ea] to-[#8d8d8b]"}>
      <svg viewBox="0 0 60 60" className="size-[60px]">
        <circle cx="30" cy="30" r="26" fill="#2b2b2d" />
        <circle cx="30" cy="30" r="22.500" fill="none" stroke="#8f9193" strokeWidth="3" strokeDasharray="1.800 1.500" />
        <circle cx="30" cy="30" r="17.500" fill="#3f4143" stroke="#a0a2a4" strokeWidth="3" />
        <circle cx="30" cy="30" r="6" fill="#4a4c4e" stroke="#a0a2a4" strokeWidth="2.500" />
        <path d="M36 30h12M27 25l-6-10M27 35l-6 10" stroke="#a0a2a4" strokeWidth="3" />
      </svg>
    </div>
  );
}

function ChromeLogo() {
  return (
    <div className={tile + "bg-white"}>
      <svg viewBox="0 0 54 54" className="size-[54px]">
        <path d="M27 27L4.500 14A26 26 0 0 1 49.500 14z" fill="#e33b2e" />
        <path d="M27 27L49.500 14A26 26 0 0 1 27 53z" fill="#fbc116" />
        <path d="M27 27L27 53A26 26 0 0 1 4.500 14z" fill="#2ba24c" />
        <path d="M27 15h23a26 26 0 0 1-1 12L37.400 33z" fill="#fbc116" />
        <path d="M16.600 33L4.500 14l7-3z" fill="#2ba24c" />
        <path d="M37.400 33L27 53l-6-1 6-13z" fill="#fbc116" />
        <path d="M6.500 11A26 26 0 0 1 50 15H27z" fill="#e33b2e" />
        <circle cx="27" cy="27" r="12.500" fill="#fff" />
        <circle cx="27" cy="27" r="10" fill="#2f74ec" />
      </svg>
    </div>
  );
}

function ActivityTrace({ className }: { className: string }) {
  return (
    <svg viewBox="0 0 50 50" className={className} fill="none">
      <rect width="50" height="50" rx="8" fill="#07100e" />
      <path d="M0 12h50M0 25h50M0 38h50M12 0v50M25 0v50M38 0v50" stroke="#1f4a44" strokeWidth="1" />
      <path d="M2 29h7l2-4 2-21 2 36 3-10h5l3-1 3 3 3-7 4 6 4-3 3 2h5" stroke="#4fb79c" strokeWidth="1.400" />
    </svg>
  );
}

function Trash() {
  return (
    <svg viewBox="0 0 54 70" className="h-[70px] w-[54px]">
      <path d="M2 10l8-8 6 4 6-6 8 5 6-4 6 6 8 3-3 10H6z" fill="#e8e8ea" />
      <path d="M10 6l6 8 5-8zM24 5l4 9 6-9zM38 6l-2 8 8-2z" fill="#4f5560" />
      <path d="M17 10l4-4 4 7z" fill="#58b8a0" />
      <path d="M1 11c14 6 38 6 52 0l-6 52c-1 9-39 9-40 0z" fill="#dcdadf" />
      <path d="M1 11c14 6 38 6 52 0l-1 6c-14 5-36 5-50 0z" fill="#c5c3ca" />
      <path d="M12 20l4 44h10l-4-30 12 20 8-34z" fill="#efeef1" opacity=".7" />
    </svg>
  );
}

function Dock() {
  return (
    <div className="mt-[2px] ml-[191px] flex h-24 w-[2499px] rounded-[26px] border-2 border-white/20 bg-[linear-gradient(to_right,#5e5474_0%,#5f5475_22%,#665489_45%,#6b548f_58%,#8f53b3_68%,#8c54b0_76%,#77569f_86%,#63548a_94%,#63548a_100%)] bg-origin-border pl-[3px] font-['Inter','Liberation_Sans',sans-serif]">
      <DockItem dot><Finder /></DockItem>
      <DockItem>
        <div className={tile + "bg-[linear-gradient(100deg,#6d0b3a,#12202c_50%,#0e5a4c)]"}>
          <div className="size-[50px] rounded-full border-2 border-white/40 bg-[radial-gradient(circle_at_52%_50%,#fff_0%,#cfe8ff_12%,transparent_34%),conic-gradient(from_0deg,#1d6a5a,#1f8aa8,#2456a8,#5a2a90,#d03a80,#a8305c,#1d6a5a)]" />
        </div>
      </DockItem>
      <DockItem><Launchpad /></DockItem>
      <DockItem>
        <div className={tile + "bg-linear-to-b from-[#2070f0] to-[#22c0fb]"}>
          <svg viewBox="0 0 42 28" className="h-[28px] w-[42px]">
            <rect width="42" height="28" rx="3" fill="#f2f2f4" />
            <path d="M1 27l14-13M41 27L27 14M1 1l16 16c2.500 2.500 5.500 2.500 8 0L41 1" fill="none" stroke="#8f9094" strokeWidth="1.400" />
          </svg>
        </div>
      </DockItem>
      <DockItem>
        <div className={tile + "bg-linear-to-r from-[#9a6f42] via-[#a87c49] to-[#8d6538]"}>
          <svg viewBox="0 0 60 60" className="size-[60px]">
            <path d="M57 8h3v12h-3z" fill="#b9bcc0" />
            <path d="M57 20h3v12h-3z" fill="#48a8e8" />
            <path d="M57 32h3v10h-3z" fill="#f0902a" />
            <path d="M57 42h3v10h-3z" fill="#5cc85a" />
            <circle cx="31" cy="30" r="18" fill="none" stroke="#7a5630" strokeWidth="1.600" />
            <circle cx="31" cy="25" r="6.500" fill="#80592f" />
            <path d="M18 42c2-8 24-8 26 0-6 7-20 7-26 0z" fill="#80592f" />
          </svg>
        </div>
      </DockItem>
      <DockItem dot>
        <div className={tile + "flex-col justify-start! bg-[#f7f7f5]"}>
          <div className="flex h-[19px] w-full items-center justify-center bg-[#fb4f4c] text-[12px] font-semibold text-white">FEB</div>
          <div className="text-[36px] leading-[38px] font-light text-[#222]">3</div>
        </div>
      </DockItem>
      <DockItem dot>
        <div className={tile + "flex-col justify-start! bg-[#f3f2ee]"}>
          <div className="h-[15px] w-full bg-linear-to-b from-[#fddc4c] to-[#fdc60b]" />
          <div className="w-full border-t-2 border-dotted border-[#b9b7b0]" />
          <div className="mt-[11px] h-[2px] w-full bg-[#dcdad4]" />
          <div className="mt-[13px] h-[2px] w-full bg-[#dcdad4]" />
        </div>
      </DockItem>
      <DockItem><Reminders /></DockItem>
      <DockItem><Maps /></DockItem>
      <DockItem><Photos /></DockItem>
      <DockItem>
        <div className={tile + "bg-linear-to-b from-[#5ff773] to-[#2cc93a]"}>
          <svg viewBox="0 0 46 42" className="h-[42px] w-[46px]">
            <path d="M23 1c12.500 0 22 8 22 18.500S35.500 38 23 38c-2 0-4-.2-6-.7-2 2-4.500 3-8 3.200 2-1.800 2.600-3.500 2.600-5.500C5 31.500 1 26 1 19.500 1 9 10.500 1 23 1z" fill="#f1f8f1" />
          </svg>
        </div>
      </DockItem>
      <DockItem>
        <div className={tile + "bg-linear-to-b from-[#5ff773] to-[#2cc93a]"}>
          <svg viewBox="0 0 42 26" className="h-[26px] w-[42px]" fill="#eef7ee">
            <rect width="29" height="26" rx="7" />
            <path d="M31 10l10-8v22l-10-8z" />
          </svg>
        </div>
      </DockItem>
      <DockItem>
        <div className={tile + "items-end! gap-[3px] bg-linear-to-b from-[#73fa5c] to-[#34d82a] pb-[9px]"}>
          <div className="h-[12px] w-[7px] rounded-t-[2px] bg-[#f0faef]" />
          <div className="h-[23px] w-[7px] rounded-t-[2px] bg-[#f0faef]" />
          <div className="h-[42px] w-[7px] rounded-t-[2px] bg-[#f0faef]" />
          <div className="h-[31px] w-[7px] rounded-t-[2px] bg-[#f0faef]" />
        </div>
      </DockItem>
      <DockItem>
        <div className={tile + "bg-linear-to-b from-[#fdb235] to-[#fb8418]"}>
          <svg viewBox="0 0 60 60" className="size-[60px]">
            <path d="M13 50h38" stroke="#fcd9a4" strokeWidth="2" />
            <path d="M46 12c3-2 5 0 4 3L20 45l-9 5 4-10z" fill="#f7f3ee" />
            <path d="M17 38l31-24" stroke="#c9b9a6" strokeWidth="1.200" />
          </svg>
        </div>
      </DockItem>
      <DockItem>
        <div className={tile + "bg-linear-to-b from-[#32c6fb] to-[#2068f5]"}>
          <svg viewBox="0 0 60 60" className="size-[60px]">
            <path d="M15 9h30l3 16H12z" fill="#f4f8fc" />
            <path d="M17 23h26" stroke="#6f93b8" strokeWidth="1.400" />
            <path d="M30 11a5 5 0 0 1 5 5h-5z" fill="#f2672e" />
            <path d="M30 16h5a5 5 0 0 1-5 5z" fill="#4cc052" />
            <path d="M30 11v10a5 5 0 0 1 0-10z" fill="#8a4fd0" />
            <path d="M28.800 25h2.400v24h-2.400z" fill="#c8dcf2" />
            <rect x="21" y="49" width="19" height="3" rx="1.500" fill="#e8f1fa" />
          </svg>
        </div>
      </DockItem>
      <DockItem>
        <div className={tile + "bg-linear-to-b from-[#fb5b74] to-[#fa0b38]"}>
          <svg viewBox="0 0 60 60" className="size-[60px]" fill="#fff">
            <path d="M22 15l22-5v29a6 5.500 0 1 1-3.500-5V19.500l-15 3.300V43a6 5.500 0 1 1-3.500-5z" />
          </svg>
        </div>
      </DockItem>
      <DockItem>
        <div className={tile + "bg-linear-to-b from-[#c653f2] to-[#7c0dbd]"}>
          <svg viewBox="0 0 60 60" className="size-[60px]" fill="none" stroke="#fff" strokeWidth="2.600">
            <path d="M20 47a21 21 0 1 1 20 0" />
            <path d="M22 38a13 13 0 1 1 16 0" />
            <circle cx="30" cy="26" r="5" fill="#fff" stroke="none" />
            <path d="M25 37c0-4 10-4 10 0l-2 14c-.8 2.500-5.200 2.500-6 0z" fill="#fff" stroke="none" />
          </svg>
        </div>
      </DockItem>
      <DockItem>
        <div className={tile + "bg-linear-to-b from-[#26362f] to-[#0b0e10] text-white"}>
          <FaApple className="size-[20px]" />
          <span className="text-[23px] leading-none font-medium">tv</span>
        </div>
      </DockItem>
      <DockItem>
        <div className={tile + "bg-linear-to-b from-[#fc9f10] to-[#f86a1c]"}>
          <svg viewBox="0 0 42 34" className="h-[34px] w-[42px]" fill="#f8f3ee">
            <path d="M20 4C16-1 5-1 1 3v29c5-3 14-3 19 0zM22 4c4-5 15-5 19-1v29c-5-3-14-3-19 0z" />
          </svg>
        </div>
      </DockItem>
      <DockItem>
        <div className={tile + "bg-linear-to-b from-[#1fbcf8] to-[#1b55e2]"}>
          <svg viewBox="0 0 60 60" className="size-[60px]" stroke="#f3f8fd" strokeWidth="5" strokeLinecap="round">
            <path d="M33 13L18 39M27 13l18 32M11 37h21M42 37h7M16 45l-1 2" />
          </svg>
        </div>
      </DockItem>
      <DockItem><Settings /></DockItem>
      <div className="mt-3 ml-[18px] mr-[16px] h-[72px] w-[2px] bg-[#5b2a80]" />
      <DockItem dot>
        <div className={tile + "border-2 border-[#a3adad] bg-black"}>
          <ActivityTrace className="size-[48px]" />
        </div>
      </DockItem>
      <DockItem dot>
        <div className={tile + "bg-linear-to-b from-[#7480f8] to-[#5563f2]"}>
          <FaDiscord className="size-[44px] text-white" />
        </div>
      </DockItem>
      <DockItem dot>
        <div className="relative">
          <div className={tile + "bg-linear-to-b from-[#35a8ea] to-[#2590dd]"}>
            <FaTelegramPlane className="mr-1 size-[42px] text-white" />
          </div>
          <div className="absolute -top-[7px] -right-[9px] flex h-[28px] w-[29px] items-center justify-center rounded-full bg-[#f5333f] text-[15px] font-medium text-white">..13</div>
        </div>
      </DockItem>
      <DockItem dot><ChromeLogo /></DockItem>
      <DockItem dot>
        <div className={tile + "items-start! justify-start! border-2 border-[#a3adb5] bg-[#232323] pt-[6px] pl-[8px] font-['Liberation_Mono',monospace] text-[15px] leading-5 font-bold text-white ring-4 ring-black ring-inset"}>&gt;_</div>
      </DockItem>
      <DockItem dot>
        <div className={tile + "bg-linear-to-b from-[#4c4c4c] to-[#3c3c3c]"}>
          <svg viewBox="0 0 34 42" className="h-[42px] w-[34px]" fill="#ff9800">
            <path d="M33 0v11L1 21V11c0-1 .5-1.500 1.500-2zM1 10l32 11v10c0 1-.5 1.500-1.500 2L1 42V31l18-6L1 20z" />
          </svg>
        </div>
      </DockItem>
      <DockItem dot>
        <div className={tile + "bg-white"}>
          <svg viewBox="0 0 44 44" className="size-[44px]">
            <path d="M31 1l-20 19-7-5.500-3 1.500v2l30 25z" fill="#0a6cbc" />
            <path d="M31 43L11 24l-7 5.500L1 28v-2L31 1z" fill="#1583d2" />
            <path d="M31 1l11 5v32l-11 5c1-1 1-3 1-3V4s0-2-1-3z" fill="#2aa3f0" />
            <path d="M32 13v18L20 22z" fill="#fff" />
          </svg>
        </div>
      </DockItem>
      <div className="mt-3 ml-[16px] mr-[18px] h-[72px] w-[2px] bg-[#4b3570]" />
      <div className="relative mt-[22px] ml-[2px] flex h-[42px] w-[70px] bg-[#f3eef3]">
        <div className="ml-[12px] h-full w-[32px] bg-white pt-[3px] pl-[2px]">
          <div className="h-[3px] w-[18px] bg-[#55505a]" />
          <div className="mt-[5px] h-[1px] w-[28px] bg-[#dcd8de]" />
        </div>
        <div className="mt-[8px] ml-[3px] h-[8px] w-[12px] bg-[#cfc8d2]" />
        <div className="absolute right-[2px] -bottom-[12px] flex h-[22px] w-[22px] flex-col items-center rounded-[5px] bg-white">
          <div className="flex h-[7px] w-full items-center justify-center rounded-t-[5px] bg-[#fb4f4c] text-[5px] leading-[7px] font-bold text-white">JUL</div>
          <div className="text-[13px] leading-[15px] text-[#222]">17</div>
        </div>
      </div>
      <div className="relative mt-[24px] ml-2 h-[38px] w-[70px] bg-[#f7f5f7]">
        <div className="h-[5px] w-full bg-[#e3dfe5]" />
        <div className="absolute right-[2px] -bottom-[12px]">
          <ActivityTrace className="size-[22px]" />
        </div>
      </div>
      <div className="mt-[7px] ml-4">
        <Trash />
      </div>
    </div>
  );
}

/* ---------- Desktop ---------- */

export default function App() {
  return (
    <div className="flex h-[1800px] w-[2880px] flex-col overflow-hidden bg-[linear-gradient(to_bottom,#2a0070_0%,#16171a_4%,#16171a_93.500%,#05000c_94.200%,#12002c_97%,#18003c_100%)]">
      <MenuBar />
      <div className="h-[2px] bg-[#12041f]" />
      <div className="flex h-[1642px]">
        <div className="flex w-[2874px] flex-col overflow-hidden rounded-[20px] border-t-2 border-[#7c7c7e] shadow-[0_0_0_1px_#000]">
          <TabStrip />
          <AddressBar />
          <Portal />
        </div>
        <div className="w-[6px] pt-[870px]">
          <div className="ml-1 h-[14px] bg-[#2f6fc4]" />
        </div>
      </div>
      <Dock />
    </div>
  );
}
